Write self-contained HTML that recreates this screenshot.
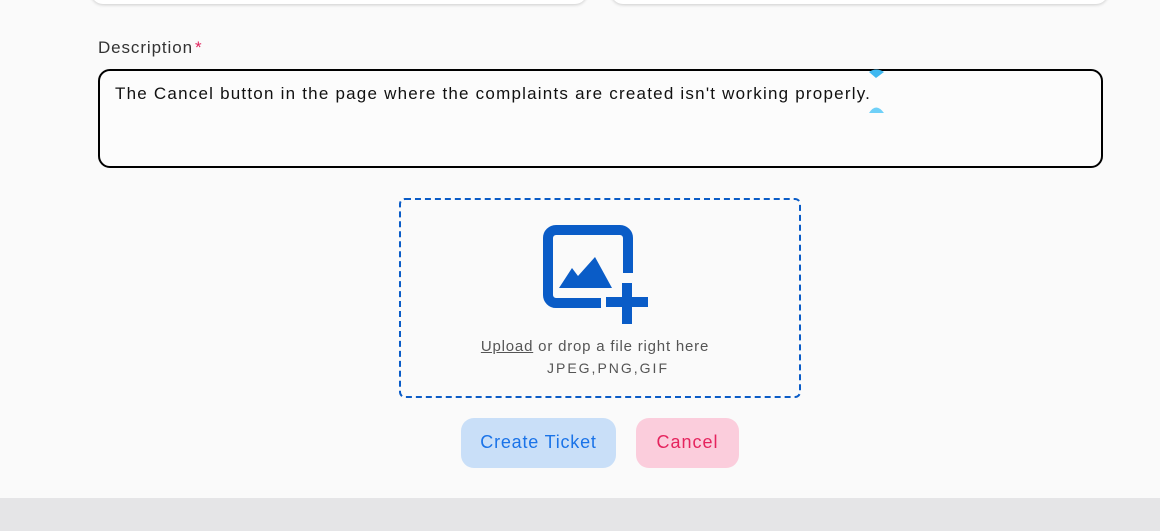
<!DOCTYPE html>
<html><head><style>
*{margin:0;padding:0;box-sizing:border-box}
body{width:1160px;height:531px;background:#fafafa;position:relative;overflow:hidden;font-family:"Liberation Sans",sans-serif}
.card{position:absolute;top:-20px;height:24px;background:#fff;border-radius:12px;box-shadow:0 1px 3px rgba(0,0,0,.18)}
.lbl{position:absolute;left:98px;top:38px;font-size:17px;color:#333;letter-spacing:0.9px}
.lbl span{color:#e0245e;margin-left:2px}
.ta{position:absolute;left:98px;top:69px;width:1005px;height:99px;border:2px solid #000;border-radius:12px;background:#fcfcfc}
.ta p{position:absolute;left:15px;top:13px;font-size:17px;color:#111;letter-spacing:1.22px;white-space:nowrap}
.drop{position:absolute;left:399px;top:198px;width:402px;height:200px;border:2px dashed #0a5cc7;border-radius:6px}
.t1{position:absolute;left:-5px;width:100%;text-align:center;top:138px;font-size:15px;color:#555;letter-spacing:0.8px}
.t2{position:absolute;left:8px;width:100%;text-align:center;top:160px;font-size:14px;color:#555;letter-spacing:2px}
.btn{position:absolute;top:418px;height:50px;border-radius:13px;font-size:18px;text-align:center;line-height:48px}
.foot{position:absolute;left:0;top:498px;width:1160px;height:33px;background:#e5e5e7}
</style></head><body>
<div class="card" style="left:91px;width:496px"></div>
<div class="card" style="left:611px;width:497px"></div>
<div class="lbl">Description<span>*</span></div>
<div class="ta"><p>The Cancel button in the page where the complaints are created isn't working properly.</p></div>
<svg style="position:absolute;left:868px;top:66px" width="18" height="50"><path d="M1 6 Q8 1 16 6 L8 12Z" fill="#3fb8f0"/><path d="M1 47 Q8 36 16 47Z" fill="#6fd0f8"/></svg>
<div class="drop">
<svg style="position:absolute;left:142px;top:25px" width="110" height="105" viewBox="543 225 110 105">
<path d="M601 303 H556 a8 8 0 0 1 -8 -8 V238 a8 8 0 0 1 8 -8 H620 a8 8 0 0 1 8 8 V273" fill="none" stroke="#0a5cc7" stroke-width="10"/>
<path d="M559 288 L572 268 L578 276 L595 257 L612 288Z" fill="#0a5cc7"/>
<rect x="622" y="283" width="10" height="41" fill="#0a5cc7"/>
<rect x="606" y="297" width="42" height="10" fill="#0a5cc7"/>
</svg>
<div class="t1"><u>Upload</u> or drop a file right here</div>
<div class="t2">JPEG,PNG,GIF</div>
</div>
<div class="btn" style="left:461px;width:155px;background:#c9dff8;color:#1a73e8;letter-spacing:0.8px">Create Ticket</div>
<div class="btn" style="left:636px;width:103px;background:#fbcddc;color:#e5245e;letter-spacing:1px">Cancel</div>
<div class="foot"></div>
</body></html>
